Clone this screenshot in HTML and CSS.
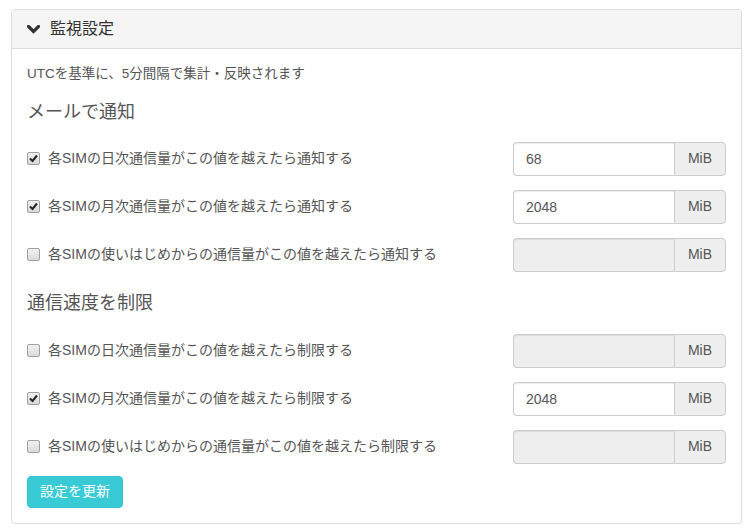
FILE: index.html
```html
<!DOCTYPE html>
<html lang="ja">
<head>
<meta charset="utf-8">
<title>監視設定</title>
<link rel="stylesheet" href="styles.css">
</head>
<body>
<div class="panel">
  <div class="panel-heading">
    <svg class="chevron" width="13" height="9" viewBox="0 0 13 9"><polyline points="1.5,1.5 6.5,6.5 11.5,1.5" fill="none" stroke="#333" stroke-width="3.2" stroke-linecap="square"/></svg>
    <span class="panel-title">監視設定</span>
  </div>
  <div class="panel-body">
    <p class="note">UTCを基準に、5分間隔で集計・反映されます</p>

    <section class="group">
      <h4 class="section-title">メールで通知</h4>
      <div class="row">
        <label class="check"><span class="box checked"><svg width="11" height="11" viewBox="0 0 11 11"><polyline points="2,5.5 4.5,8 9,2.5" fill="none" stroke="#222" stroke-width="2"/></svg></span>各SIMの日次通信量がこの値を越えたら通知する</label>
        <div class="input-group"><input class="field" type="text" value="68"><span class="addon">MiB</span></div>
      </div>
      <div class="row">
        <label class="check"><span class="box checked"><svg width="11" height="11" viewBox="0 0 11 11"><polyline points="2,5.5 4.5,8 9,2.5" fill="none" stroke="#222" stroke-width="2"/></svg></span>各SIMの月次通信量がこの値を越えたら通知する</label>
        <div class="input-group"><input class="field" type="text" value="2048"><span class="addon">MiB</span></div>
      </div>
      <div class="row">
        <label class="check"><span class="box"></span>各SIMの使いはじめからの通信量がこの値を越えたら通知する</label>
        <div class="input-group"><input class="field" type="text" value="" disabled><span class="addon">MiB</span></div>
      </div>
    </section>

    <section class="group">
      <h4 class="section-title">通信速度を制限</h4>
      <div class="row">
        <label class="check"><span class="box"></span>各SIMの日次通信量がこの値を越えたら制限する</label>
        <div class="input-group"><input class="field" type="text" value="" disabled><span class="addon">MiB</span></div>
      </div>
      <div class="row">
        <label class="check"><span class="box checked"><svg width="11" height="11" viewBox="0 0 11 11"><polyline points="2,5.5 4.5,8 9,2.5" fill="none" stroke="#222" stroke-width="2"/></svg></span>各SIMの月次通信量がこの値を越えたら制限する</label>
        <div class="input-group"><input class="field" type="text" value="2048"><span class="addon">MiB</span></div>
      </div>
      <div class="row">
        <label class="check"><span class="box"></span>各SIMの使いはじめからの通信量がこの値を越えたら制限する</label>
        <div class="input-group"><input class="field" type="text" value="" disabled><span class="addon">MiB</span></div>
      </div>
    </section>

    <button class="btn" type="button">設定を更新</button>
  </div>
</div>
</body>
</html>
```

FILE: styles.css
```css
* { box-sizing: border-box; }
html, body { background: #fff; }
body {
  margin: 0;
  font-family: "Liberation Sans", Arial, "Noto Sans CJK JP", sans-serif;
  font-size: 14px;
  line-height: 1.42857;
  color: #555;
}
.panel {
  margin: 9px 8px 0 11px;
  height: 515px;
  border: 1px solid #ddd;
  border-radius: 4px;
  background: #fff;
  box-shadow: 0 1px 1px rgba(0,0,0,.05);
}
.panel-heading {
  display: flex;
  align-items: center;
  gap: 10px;
  height: 39px;
  padding: 0 15px;
  background: #f5f5f5;
  border-bottom: 1px solid #ddd;
  border-radius: 3px 3px 0 0;
}
.chevron { display: block; }
.panel-title {
  font-size: 16px;
  line-height: 18px;
  color: #333;
}
.panel-body {
  padding: 15px;
}
.note {
  margin: 0 0 19px;
  font-size: 13.5px;
  line-height: 19px;
}
.group {
  display: flex;
  flex-direction: column;
}
.group + .group { margin-top: 7px; }
.section-title {
  margin: 0 0 20px;
  font-size: 18px;
  line-height: 20px;
  font-weight: normal;
  color: #555;
}
.group + .group .section-title { margin-bottom: 21px; }
.row {
  display: flex;
  align-items: center;
  justify-content: space-between;
  height: 34px;
  margin-bottom: 14px;
}
.group:last-of-type .row:last-child { margin-bottom: 12px; }
.check {
  display: flex;
  align-items: center;
  font-size: 14px;
  color: #555;
}
.box {
  display: flex;
  align-items: center;
  justify-content: center;
  width: 13px;
  height: 13px;
  margin-right: 8px;
  border: 1px solid #a0a0a0;
  border-radius: 2px;
  background: linear-gradient(#f2f2f2, #d9d9d9);
}
.box svg { display: block; }
.input-group {
  display: flex;
  width: 213px;
  height: 34px;
}
.field {
  flex: 1;
  min-width: 0;
  height: 34px;
  padding: 6px 12px;
  font: inherit;
  font-size: 14px;
  color: #555;
  border: 1px solid #ccc;
  border-right: 0;
  border-radius: 4px 0 0 4px;
  background: #fff;
  box-shadow: inset 0 1px 1px rgba(0,0,0,.075);
}
.field:disabled { background: #eee; }
.addon {
  display: flex;
  align-items: center;
  justify-content: center;
  width: 52px;
  font-size: 14px;
  color: #555;
  background: #eee;
  border: 1px solid #ccc;
  border-radius: 0 4px 4px 0;
}
.btn {
  display: block;
  height: 32px;
  padding: 0 12px;
  font: inherit;
  font-size: 14px;
  color: #fff;
  background: #38cbd6;
  border: 1px solid #35c4cf;
  border-radius: 4px;
}
```
